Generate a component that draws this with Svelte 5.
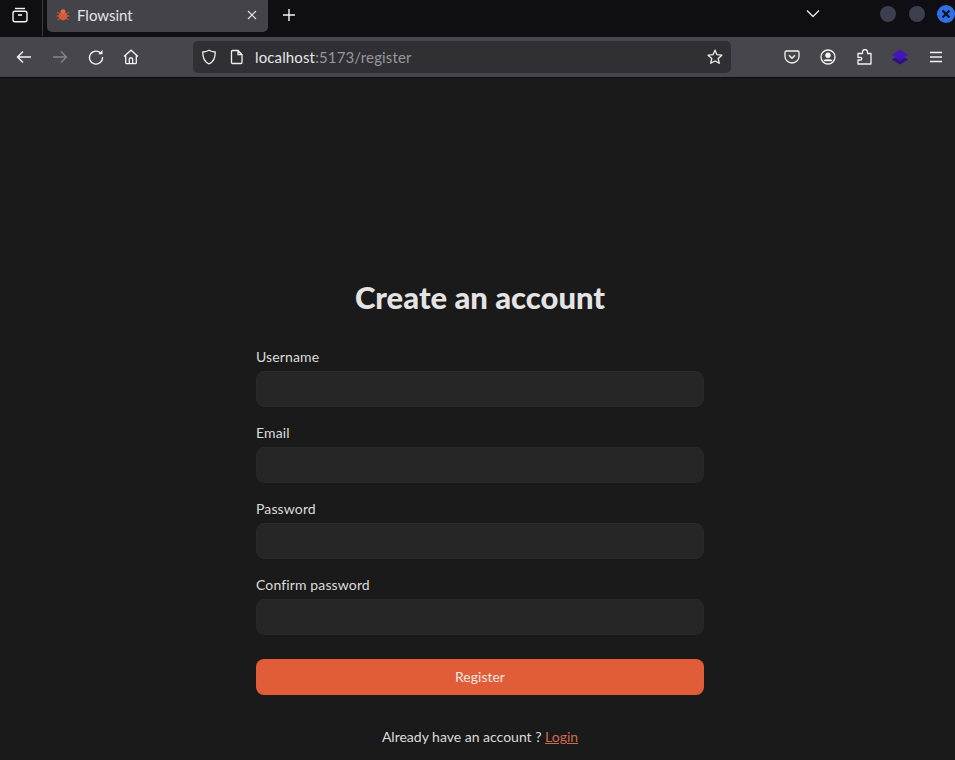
<script>
  const fields = ['Username', 'Email', 'Password', 'Confirm password'];
</script>

<div class="window">
  <header class="tabbar">
    <button class="tabs-btn" aria-label="Tabs">
      <svg width="18" height="18" viewBox="0 0 18 18" fill="none" stroke="#f4f4f6" stroke-width="1.4">
        <path d="M4 2.500h10" />
        <rect x="2" y="5.200" width="14" height="10.600" rx="2" />
        <path d="M7 9h4" stroke-width="1.600" />
      </svg>
    </button>
    <div class="divider"></div>
    <div class="tab">
      <svg class="favicon" width="14" height="14" viewBox="0 0 14 14">
        <path d="M1 4l3 2M13 4l-3 2M.5 8h3M13.500 8h-3M1.500 12l3-2.500M12.500 12l-3-2.500" stroke="#a8563f" stroke-width="1.300" />
        <ellipse cx="7" cy="8" rx="4.300" ry="4.400" fill="#d65b38" />
        <circle cx="7" cy="3.600" r="2.400" fill="#e8693f" />
      </svg>
      <span class="tab-title">Flowsint</span>
      <svg class="close" width="12" height="12" viewBox="0 0 12 12" stroke="#e4e4e8" stroke-width="1.100">
        <path d="M2 2l8 8M10 2l-8 8" />
      </svg>
    </div>
    <svg class="plus" width="14" height="14" viewBox="0 0 14 14" stroke="#f4f4f6" stroke-width="1.400">
      <path d="M7 1v12M1 7h12" />
    </svg>
    <div class="spacer"></div>
    <svg class="chev" width="14" height="9" viewBox="0 0 14 9" fill="none" stroke="#e8e8ec" stroke-width="1.400">
      <path d="M1 1.500l6 6 6-6" />
    </svg>
    <span class="dot first"></span>
    <span class="dot second"></span>
    <span class="dot close-dot">
      <svg width="10" height="10" viewBox="0 0 10 10" stroke="#10131c" stroke-width="2.200">
        <path d="M1.500 1.500l7 7M8.500 1.500l-7 7" />
      </svg>
    </span>
  </header>

  <nav class="toolbar">
    <svg class="ic back" width="16" height="16" viewBox="0 0 16 16" fill="none" stroke="#f4f4f6" stroke-width="1.400">
      <path d="M15 8H1.500M7 2.500L1.500 8 7 13.500" />
    </svg>
    <svg class="ic fwd" width="16" height="16" viewBox="0 0 16 16" fill="none" stroke="#85858a" stroke-width="1.400">
      <path d="M1 8h13.500M9 2.500L14.500 8 9 13.500" />
    </svg>
    <svg class="ic reload" width="16" height="16" viewBox="0 0 16 16" fill="none" stroke="#f4f4f6" stroke-width="1.400">
      <path d="M13.300 4.800A6.500 6.500 0 1 0 14.500 8" />
      <path d="M14.500 1v4.300h-4.300z" fill="#f4f4f6" stroke="none" />
    </svg>
    <svg class="ic home" width="16" height="16" viewBox="0 0 16 16" fill="none" stroke="#f4f4f6" stroke-width="1.300">
      <path d="M1 7.500L8 1.200l7 6.300M2.700 6.500v7.200a1 1 0 0 0 1 1h8.600a1 1 0 0 0 1-1V6.500" />
      <path d="M6.300 14.500V10a1 1 0 0 1 1-1h1.400a1 1 0 0 1 1 1v4.500" />
    </svg>
    <div class="urlbar">
      <svg class="shield" width="16" height="16" viewBox="0 0 16 16" fill="none" stroke="#f0f0f2" stroke-width="1.300">
        <path d="M8 1.200c2 1.200 4 1.700 6.200 1.800.2 5.500-1.500 9.800-6.200 11.800C3.300 12.800 1.600 8.500 1.800 3 4 2.900 6 2.400 8 1.200z" />
      </svg>
      <svg class="page" width="14" height="16" viewBox="0 0 14 16" fill="none" stroke="#f0f0f2" stroke-width="1.300">
        <path d="M2.500 1.500h5.500l4 4v8a1 1 0 0 1-1 1H2.500a1 1 0 0 1-1-1v-11a1 1 0 0 1 1-1zM8 1.500v4h4" />
      </svg>
      <span class="url"><span class="host">localhost</span>:5173/register</span>
      <div class="spacer"></div>
      <svg width="16" height="16" viewBox="0 0 16 16" fill="none" stroke="#f0f0f2" stroke-width="1.300">
        <path d="M8 1.200l2 4.500 4.900.5-3.700 3.300 1.100 4.800L8 12l-4.300 2.300 1.100-4.800L1.100 6.200 6 5.700z" stroke-linejoin="round" />
      </svg>
    </div>
    <svg class="ic pocket" width="16" height="14" viewBox="0 0 16 14" fill="none" stroke="#f4f4f6" stroke-width="1.300">
      <path d="M2.300 1h11.400A1.300 1.300 0 0 1 15 2.300V6.500a7 6.500 0 0 1-14 0V2.300A1.300 1.300 0 0 1 2.300 1z" />
      <path d="M5 5.300l3 2.900 3-2.900" stroke-width="1.400" />
    </svg>
    <svg class="ic account" width="16" height="16" viewBox="0 0 16 16" fill="none" stroke="#f4f4f6" stroke-width="1.300">
      <circle cx="8" cy="8" r="7" />
      <circle cx="8" cy="6.300" r="2.700" fill="#f4f4f6" stroke="none" />
      <path d="M3.800 11.200c1-1.200 7.400-1.200 8.400 0v1H3.800z" fill="#f4f4f6" stroke="none" />
    </svg>
    <svg class="ic ext" width="16" height="16" viewBox="0 0 16 16" fill="none" stroke="#f4f4f6" stroke-width="1.300">
      <path d="M2 4.500H6.500V3a2.500 2.500 0 0 1 5 0V4.500H15V15H2V11H4.500a1.300 1.300 0 0 0 0-2.600H2z" stroke-linejoin="round" />
    </svg>
    <svg class="ic layers" width="16" height="16" viewBox="0 0 16 16">
      <path d="M8 6L16 10.500 8 15.500 0 10.500z" fill="#2a1180" />
      <path d="M8 .5L16 6l-8 6L0 6z" fill="#4216bb" />
    </svg>
    <svg class="ic menu" width="14" height="12" viewBox="0 0 14 12" stroke="#f4f4f6" stroke-width="1.300">
      <path d="M1 1.500h12M1 6h12M1 10.500h12" />
    </svg>
  </nav>

  <main class="page-body">
    <form class="form">
      <h1>Create an account</h1>
      {#each fields as f}
        <div class="field">
          <span class="label">{f}</span>
          <div class="input"></div>
        </div>
      {/each}
      <button type="button" class="submit">Register</button>
      <p class="foot">Already have an account ? <span class="link">Login</span></p>
    </form>
  </main>
</div>

<style>
  :global(body) {
    margin: 0;
    background: #1a1a1a;
    overflow: hidden;
  }
  .window {
    width: 955px;
    height: 760px;
    display: flex;
    flex-direction: column;
    font-family: "Lato", "Noto Sans", sans-serif;
    overflow: hidden;
  }
  svg {
    display: block;
    flex: none;
  }
  .spacer {
    flex: 1;
  }

  .tabbar {
    height: 37px;
    flex: none;
    background: #0e0e13;
    display: flex;
    align-items: flex-start;
    box-sizing: border-box;
  }
  .tabs-btn {
    all: unset;
    width: 40px;
    height: 30px;
    margin-right: 2px;
    display: flex;
    align-items: center;
    justify-content: center;
  }
  .divider {
    width: 1px;
    height: 36px;
    background: #3c3c42;
    margin-right: 4px;
  }
  .tab {
    width: 221px;
    height: 32px;
    background: #434349;
    border-radius: 0 0 5px 5px;
    display: flex;
    align-items: center;
    box-sizing: border-box;
    padding: 0 0 3px 9px;
  }
  .favicon {
    margin-right: 7px;
  }
  .tab-title {
    font-size: 15px;
    color: #e6e6e8;
    flex: 1;
  }
  .close {
    margin-right: 10px;
  }
  .plus {
    margin: 8px 0 0 14px;
  }
  .chev {
    margin: 9px 60px 0 0;
  }
  .dot {
    width: 16px;
    height: 16px;
    border-radius: 50%;
    background: #3d3f4e;
    margin-top: 6px;
    display: flex;
    align-items: center;
    justify-content: center;
  }
  .second {
    margin-left: 13px;
  }
  .close-dot {
    margin-left: 12px;
    background: #2f6fe8;
    width: 18px;
    height: 18px;
    margin-top: 5px;
  }

  .toolbar {
    height: 41px;
    flex: none;
    box-sizing: border-box;
    background: #46464c;
    border-bottom: 1px solid #0e0e10;
    display: flex;
    align-items: center;
    padding-bottom: 1px;
  }
  .back { margin-left: 16px; }
  .fwd { margin-left: 20px; }
  .reload { margin-left: 20px; }
  .home { margin-left: 19px; }
  .urlbar {
    width: 538px;
    height: 32px;
    margin-left: 54px;
    background: #303034;
    border-radius: 5px;
    display: flex;
    align-items: center;
    box-sizing: border-box;
    padding: 0 8px;
    flex: none;
  }
  .shield { margin-right: 13px; }
  .page { margin-right: 11px; }
  .url {
    font-size: 15px;
    letter-spacing: 0.13px;
    color: #97979c;
  }
  .host { color: #e6e6e8; }
  .pocket { margin-left: 53px; }
  .account { margin-left: 20px; }
  .ext { margin-left: 20px; }
  .layers { margin-left: 20px; }
  .menu { margin-left: 21px; }

  .page-body {
    flex: 1;
    background: #1a1a1a;
    padding-left: 256px;
  }
  .form {
    width: 448px;
    display: flex;
    flex-direction: column;
    padding-top: 201px;
  }
  h1 {
    margin: 0 0 32px;
    font-size: 31px;
    line-height: 36px;
    font-weight: 900;
    text-align: center;
    color: #e4e4e4;
  }
  .field {
    display: flex;
    flex-direction: column;
    margin-bottom: 16px;
  }
  .label {
    font-size: 14px;
    letter-spacing: 0.13px;
    line-height: 20px;
    color: #dcdcdc;
    margin-bottom: 4px;
  }
  .input {
    height: 36px;
    box-sizing: border-box;
    background: #262626;
    border: 1px solid #292929;
    border-radius: 8px;
  }
  .submit {
    all: unset;
    height: 36px;
    margin-top: 8px;
    background: #e05d38;
    border-radius: 8px;
    color: #f0e6e2;
    font-size: 14px;
    text-align: center;
    line-height: 36px;
    font-family: inherit;
  }
  .foot {
    margin: 32px 0 0;
    font-size: 14px;
    line-height: 20px;
    text-align: center;
    color: #dcdcdc;
  }
  .link {
    color: #cf6a4b;
    text-decoration: underline;
  }
</style>
